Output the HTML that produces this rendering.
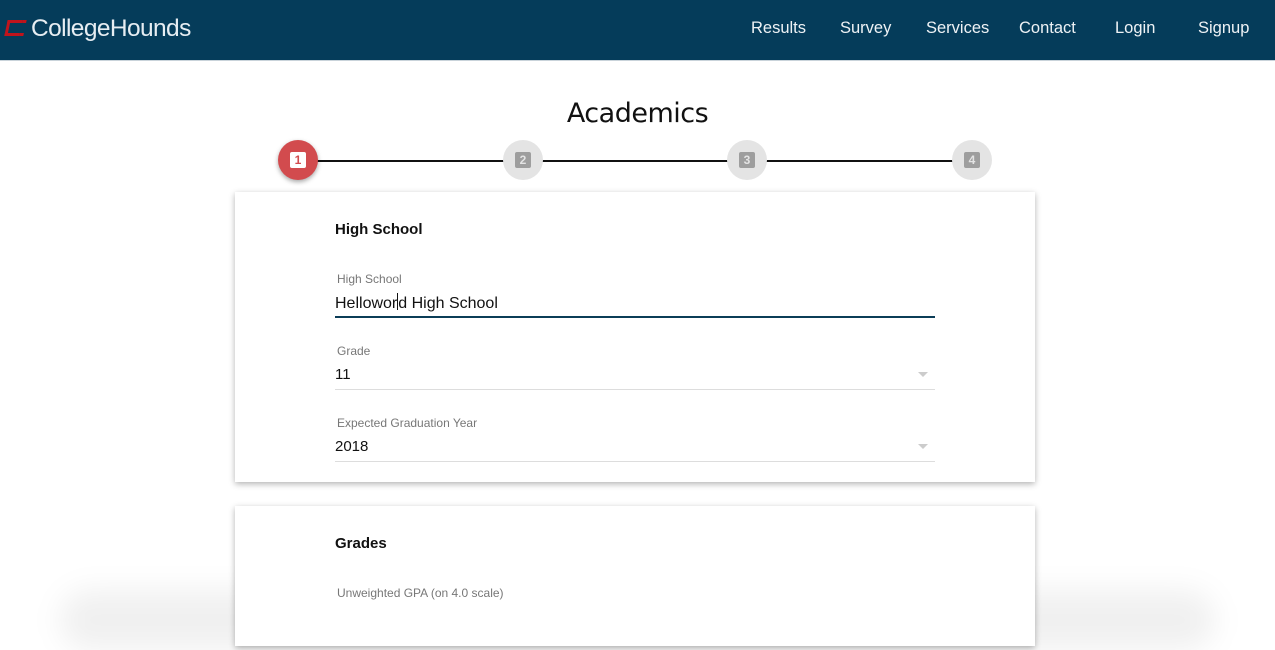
<!DOCTYPE html>
<html><head><style>
*{margin:0;padding:0;box-sizing:border-box}
body{width:1275px;height:610px;overflow:hidden;background:#fff;font-family:"Liberation Sans",Arial,sans-serif;position:relative}
.nav{position:absolute;left:0;top:0;width:1275px;height:61px;background:#053c5a;border-bottom:1px solid #c9d3da}
.logo{position:absolute;left:31px;top:15px;color:#e6edf2;font-size:24.5px;letter-spacing:-0.6px}
.logoc{position:absolute;left:6px;top:20px;width:15px;height:16px;border:3px solid #c0141c;border-right:none;transform:skewX(-12deg)}
.logoc:after{content:"";position:absolute;right:-4px;top:-3px;width:4px;height:3px;background:#c0141c;box-shadow:0 13px 0 #c0141c}
.ni{position:absolute;top:19px;color:#eef2f5;font-size:16.5px}
h1{position:absolute;top:98px;left:0;width:1275px;text-align:center;font-weight:normal;font-size:27px;color:#111;font-family:"DejaVu Sans",sans-serif;letter-spacing:-0.5px}
.line{position:absolute;top:160px;left:298px;width:675px;height:2px;background:#111}
.step{position:absolute;top:140px;width:40px;height:40px;border-radius:50%;background:#e4e4e4}
.step span{position:absolute;left:12px;top:12px;width:16px;height:16px;background:#9e9e9e;color:#e4e4e4;font-size:12px;font-weight:bold;text-align:center;line-height:16px;border-radius:2px}
.step.a{background:#d24b4e;box-shadow:0 2px 5px rgba(0,0,0,.35)}
.step.a span{background:#fff;color:#d24b4e}
.card{position:absolute;left:235px;width:800px;background:#fff;box-shadow:0 2px 6px rgba(0,0,0,.3)}
.ct{position:absolute;left:100px;font-weight:bold;font-size:15px;color:#111}
.lab{position:absolute;left:102px;font-size:12px;color:#777}
.val{position:absolute;left:100px;font-size:15px;color:#111}
.ul{position:absolute;left:100px;width:600px;height:1px;background:#ddd}
.arr{position:absolute;left:683px;width:0;height:0;border-left:5px solid transparent;border-right:5px solid transparent;border-top:5px solid #ccc}
.foot{position:absolute;left:60px;width:1155px;top:590px;height:60px;background:rgba(0,0,0,.06);filter:blur(14px);border-radius:40px}
.cur{display:inline-block;width:1px;height:17px;background:#111;vertical-align:-2px}
</style></head><body>
<div class="nav">
<div class="logoc"></div>
<div class="logo">CollegeHounds</div>
<div class="ni" style="left:751px">Results</div>
<div class="ni" style="left:840px">Survey</div>
<div class="ni" style="left:926px">Services</div>
<div class="ni" style="left:1019px">Contact</div>
<div class="ni" style="left:1115px">Login</div>
<div class="ni" style="left:1198px">Signup</div>
</div>
<h1>Academics</h1>
<div class="line"></div>
<div class="step a" style="left:278px"><span>1</span></div>
<div class="step" style="left:503px"><span>2</span></div>
<div class="step" style="left:727px"><span>3</span></div>
<div class="step" style="left:952px"><span>4</span></div>
<div class="foot"></div>
<div class="card" style="top:192px;height:290px">
<div class="ct" style="top:29px">High School</div>
<div class="lab" style="top:80px">High School</div>
<div class="val" style="top:101px;font-size:16px">Hellowor<span class="cur"></span>d High School</div>
<div class="ul" style="top:124px;height:2px;background:#0b3d57"></div>
<div class="lab" style="top:152px">Grade</div>
<div class="val" style="top:174px">11</div>
<div class="arr" style="top:180px"></div>
<div class="ul" style="top:197px"></div>
<div class="lab" style="top:224px">Expected Graduation Year</div>
<div class="val" style="top:246px">2018</div>
<div class="arr" style="top:252px"></div>
<div class="ul" style="top:269px"></div>
</div>
<div class="card" style="top:506px;height:140px">
<div class="ct" style="top:29px">Grades</div>
<div class="lab" style="top:80px">Unweighted GPA (on 4.0 scale)</div>
</div>
</body></html>
